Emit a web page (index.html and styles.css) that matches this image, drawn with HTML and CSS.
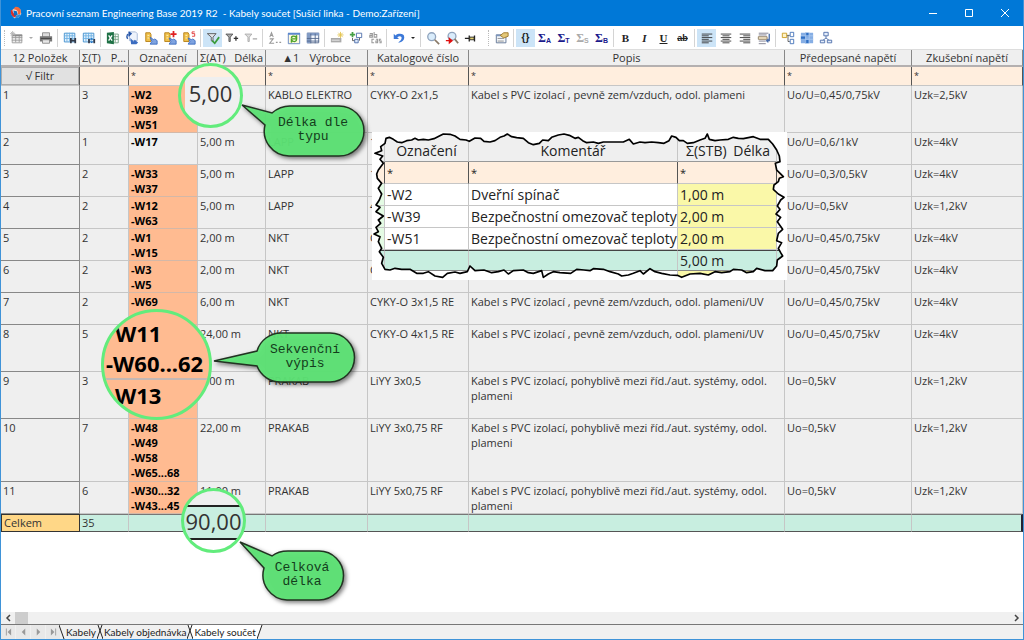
FILE: index.html
```html
<!DOCTYPE html>
<html lang="cs">
<head>
<meta charset="utf-8">
<title>Pracovní seznam Engineering Base 2019 R2</title>
<link rel="stylesheet" href="styles.css">
</head>
<body>
<div class="window">
  <header class="titlebar">
    <svg class="logo" viewBox="0 0 16 16"><path d="M3 5 8 1l5 3 1 5-3 4-5 1-3-4z" fill="#f0e4dc"/><path d="M7 1c4-1 8 3 6 8l-3 1c1-4-1-6-5-6z" fill="#f26a3c"/><path d="M2 5c0 4 1 7 5 8l2-3C5 9 4 7 4 4z" fill="#d92f2a"/><path d="M13 9c0 3-2 5-6 5l1-3z" fill="#2b8fd8"/><path d="M5 5l4 1 1 4-4 1z" fill="#0a6ec4"/></svg>
    <h1 class="title">Pracovní seznam Engineering Base 2019 R2&nbsp; - Kabely součet [Sušící linka - Demo:Zařízení]</h1>
    <button class="winbtn" aria-label="Minimalizovat"><svg viewBox="0 0 10 10"><path d="M1 5.500h8"/></svg></button>
    <button class="winbtn" aria-label="Maximalizovat"><svg viewBox="0 0 10 10"><path d="M1.500 1.500h7v7h-7z"/></svg></button>
    <button class="winbtn" aria-label="Zavřít"><svg viewBox="0 0 10 10"><path d="M1 1l8 8M9 1l-8 8"/></svg></button>
  </header>

  <div class="toolbar" role="toolbar">
    <span class="grip"></span>
    <button class="tool" aria-label="Nový"><svg viewBox="0 0 16 16"><path d="M2.500 4.500h11v9h-11zM2 7.500h12M2 10.500h12M6.500 5v8M10.500 5v8" fill="#eee" stroke="#9a9a9a"/><path d="M2 4h12v2H2z" fill="#8c8c8c"/><path d="M3 0v6M0 3h6M1 1l4 4M5 1 1 5" stroke="#b5b5b5"/></svg></button>
    <button class="caret pale" aria-label="Více"></button>
    <button class="tool" aria-label="Tisk"><svg viewBox="0 0 16 16"><path d="M4 2h8v5H4z" fill="#ddd" stroke="#888"/><path d="M1 6h14v6H1z" fill="#777"/><path d="M2 8h12v1H2z" fill="#444"/><path d="M4 10h8v4H4z" fill="#e8e8e8" stroke="#888"/></svg></button>
    <span class="sep"></span>
    <button class="tool" aria-label="Hledat"><svg viewBox="0 0 16 16"><path d="M1.500 2.500h12v10h-12z" fill="#e3f2fd" stroke="#3b8ccc"/><path d="M1 5.500h12M1 8.500h12M4.500 2v10M7.500 2v10M10.500 2v10" stroke="#6cb0e4"/><path d="M8 8h2v6H8zM13 8h2v6h-2zM10 10h3v2h-3z" fill="#333a48"/></svg></button>
    <button class="tool" aria-label="Hledat další"><svg viewBox="0 0 16 16"><path d="M1.500 2.500h12v10h-12z" fill="#e3f2fd" stroke="#3b8ccc"/><path d="M1 5.500h12M1 8.500h12M4.500 2v10M7.500 2v10M10.500 2v10" stroke="#6cb0e4"/><path d="M7 9h2v5H7zM13 9h2v5h-2z" fill="#333a48"/><path d="M9 10l2-2 2 2zM9 12l2 2 2-2z" fill="#1b6fc0"/></svg></button>
    <span class="sep"></span>
    <button class="tool" aria-label="Excel"><svg viewBox="0 0 16 16"><path d="M7 3.500h7v10H7M7 6.500h7M7 9.500h7M10.500 4v9" fill="#fff" stroke="#6f9c7f"/><path d="M1 2l8-1v14l-8-1z" fill="#1f7145"/><path d="M3 5l4 6M7 5l-4 6" stroke="#fff" stroke-width="1.500"/></svg></button>
    <button class="tool" aria-label="Synchronizovat"><svg viewBox="0 0 16 16"><path d="M5 1h7l2 2v8H5z" fill="#eef3fb" stroke="#9fb4d6"/><path d="M3 9C1 5 3 3 6 3M4 1l3 2-3 3" fill="none" stroke="#2455a8" stroke-width="1.500"/><path d="M6 8l4 4 1-2 4 3-2 2H7z" fill="#3b6cc0"/></svg></button>
    <button class="tool" aria-label="Databáze"><svg viewBox="0 0 16 16"><path d="M2 2h5l1 2v8H2z" fill="#f0c24a" stroke="#b57e14"/><path d="M4 5h2M4 8h2" stroke="#fff4cc"/><path d="M7 7l4 3 1-1 3 2v4H7l2-3z" fill="#7fa3e0" stroke="#3b6cc0"/></svg></button>
    <button class="tool" aria-label="Přidat"><svg viewBox="0 0 16 16"><path d="M2 2h5l1 2v8H2z" fill="#f0c24a" stroke="#b57e14"/><path d="M4 5h2M4 8h2" stroke="#fff4cc"/><path d="M7 8l4 2 1-1 3 2v4H7l2-3z" fill="#7fa3e0" stroke="#3b6cc0"/><path d="M12 0v7M8.500 3.500h7" stroke="#e02020" stroke-width="2"/></svg></button>
    <button class="tool" aria-label="Nahradit"><svg viewBox="0 0 16 16"><path d="M2 2h5l1 2v8H2z" fill="#f0c24a" stroke="#b57e14"/><path d="M4 5h2M4 8h2" stroke="#fff4cc"/><path d="M7 8l4 2 1-1 3 2v4H7l2-3z" fill="#7fa3e0" stroke="#3b6cc0"/><path d="M14.500 1h-3v2h3v3h-3" fill="none" stroke="#e03030"/></svg></button>
    <span class="sep"></span>
    <button class="tool on" aria-label="Filtr"><svg viewBox="0 0 16 16"><path d="M1.500 3h10L8 7v5l-2-1V7z" fill="#dfe3e8" stroke="#555"/><path d="M7 11l3 3 5-7" fill="none" stroke="#3b9c3b" stroke-width="2"/></svg></button>
    <button class="tool" aria-label="Filtr plus"><svg viewBox="0 0 16 16"><path d="M1 3.500h8L6 7v5H4.500V7z" fill="#aaa" stroke="#555"/><path d="M12.500 6v5M10 8.500h5" stroke="#333" stroke-width="1.500"/></svg></button>
    <button class="tool" aria-label="Filtr minus"><svg viewBox="0 0 16 16"><path d="M1 3.500h8L6 7v5H4.500V7z" fill="#ddd" stroke="#aaa"/><path d="M10 9h5" stroke="#aaa" stroke-width="1.500"/></svg></button>
    <span class="sep"></span>
    <button class="tool" aria-label="Řadit"><svg viewBox="0 0 16 16"><path d="M2 7l2-5 2 5M3 5h2M2 9h4l-4 5h5M9 13h2M13 13h2" fill="none" stroke="#999" stroke-width="1.200"/></svg></button>
    <button class="tool" aria-label="Obnovit"><svg viewBox="0 0 16 16"><path d="M1.500 3.500h13v11h-13z" fill="#fffbe0" stroke="#5b7fbf"/><path d="M1 2h14v2H1z" fill="#5b88cf"/><path d="M5 8c0-2 3-3 5-1l1-2v4H8M11 9c0 3-3 4-5 2l-1 2V9h3" fill="none" stroke="#4fa32a" stroke-width="1.500"/></svg></button>
    <button class="tool" aria-label="Tabulka"><svg viewBox="0 0 16 16"><path d="M1.500 2.500h13v11h-13z" fill="#f5f8fd" stroke="#52678c"/><path d="M1 2h14v3H1zM1 5h4v9H1z" fill="#829bc4"/><path d="M1 8.500h14M1 11.500h14M5.500 3v11M10.500 3v11" stroke="#52678c"/></svg></button>
    <span class="sep"></span>
    <button class="tool" aria-label="Nový řádek"><svg viewBox="0 0 16 16"><path d="M1 8h12v5H1z" fill="#aaa"/><path d="M2 10.500h9" stroke="#eee"/><path d="M12 1v7M8.500 4.500h7M9.500 2l5 5M14.500 2l-5 5" stroke="#e3c44d"/></svg></button>
    <button class="tool" aria-label="Strom"><svg viewBox="0 0 16 16"><path d="M4 1v6M1 4h6" stroke="#45a045" stroke-width="2"/><path d="M8.500 2.500h6v5h-6z" fill="#fff" stroke="#4a6ca8"/><path d="M4 8v3h3M12 8v3" fill="none" stroke="#555"/><path d="M6.500 9.500h4v4h-4z" fill="#dce8fa" stroke="#4a6ca8"/></svg></button>
    <button class="tool" aria-label="Přejmenovat"><svg viewBox="0 0 16 16"><path d="M2 3h3v4H2V5h3M7 1v6h3V4H7" fill="none" stroke="#999" stroke-width="1.200"/><path d="M7 9.500H4.500v4H7M9 9.500h2v4H9v-2h2M15 9.500h-2v2h2v2h-2" fill="none" stroke="#999" stroke-width="1.200"/></svg></button>
    <span class="sep"></span>
    <button class="tool" aria-label="Zpět"><svg viewBox="0 0 16 16"><path d="M2 3v6h6L6 7c3-2 5-1 5 1s-2 4-4 5c5 0 7-3 7-6 0-4-6-5-10-2z" fill="#3b78d8"/></svg></button>
    <button class="caret" aria-label="Historie"></button>
    <span class="sep"></span>
    <button class="tool" aria-label="Lupa"><svg viewBox="0 0 16 16"><circle cx="6.500" cy="6.500" r="4.500" fill="#d9ecfb" stroke="#8fa3bd" stroke-width="1.500"/><path d="M10 10l5 5" stroke="#8a7a68" stroke-width="2"/></svg></button>
    <button class="tool" aria-label="Lupa další"><svg viewBox="0 0 16 16"><circle cx="8" cy="6" r="4.500" fill="#d9ecfb" stroke="#8fa3bd" stroke-width="1.500"/><path d="M11 9l4 5" stroke="#8a7a68" stroke-width="2"/><path d="M1 11h5M5 8.500 8 11l-3 2.500z" fill="#e01010" stroke="#e01010" stroke-width="1.500"/></svg></button>
    <button class="tool" aria-label="Připnout"><svg viewBox="0 0 16 16"><path d="M1 8.500h5M6 5v7M12 5v7" stroke="#222" stroke-width="1.500"/><path d="M6.500 7h5v3h-5z" fill="#e0d070" stroke="#222"/></svg></button>
    <span class="grip wide"></span>
    <button class="tool" aria-label="Vlastnosti"><svg viewBox="0 0 16 16"><path d="M1.500 4.500h11v9h-11z" fill="#f4f7fb" stroke="#5a6f90"/><path d="M1 4h11v2H1z" fill="#7d95bb"/><path d="M3 8.500h7M3 11.500h7" stroke="#888"/><path d="M6 5l4-3h5v4l-5 2z" fill="#e4c878" stroke="#9a7424"/></svg></button>
    <span class="sep"></span>
    <button class="tool on glyph">{}</button>
    <button class="tool sigma">Σ<sub>A</sub></button>
    <button class="tool sigma">Σ<sub>T</sub></button>
    <button class="tool sigma off">Σ<sub>S</sub></button>
    <button class="tool sigma">Σ<sub>B</sub></button>
    <span class="sep"></span>
    <button class="tool glyph serif">B</button>
    <button class="tool glyph serif italic">I</button>
    <button class="tool glyph serif under">U</button>
    <button class="tool glyph strike">ab</button>
    <span class="sep"></span>
    <button class="tool on" aria-label="Vlevo"><svg viewBox="0 0 16 16"><path d="M2 3.500h12M2 5.500h8M2 7.500h12M2 9.500h8M2 11.500h12M2 13.500h8" stroke="#333"/></svg></button>
    <button class="tool" aria-label="Na střed"><svg viewBox="0 0 16 16"><path d="M2 3.500h12M4 5.500h8M2 7.500h12M4 9.500h8M2 11.500h12M4 13.500h8" stroke="#333"/></svg></button>
    <button class="tool" aria-label="Vpravo"><svg viewBox="0 0 16 16"><path d="M2 3.500h12M6 5.500h8M2 7.500h12M6 9.500h8M2 11.500h12M6 13.500h8" stroke="#333"/></svg></button>
    <button class="tool" aria-label="Zalomit"><svg viewBox="0 0 16 16"><path d="M2 2.500h11M2 4.500h9M2 11.500h8M2 14.500h8" stroke="#778" /><path d="M1.500 6.500h10v3h-10z" fill="#f5e6c8" stroke="#8a7a60"/><path d="M14 3v8h-3M13 9l-2 2 2 2" fill="none" stroke="#4a6ca8" stroke-width="1.500"/></svg></button>
    <span class="sep"></span>
    <button class="tool" aria-label="Schéma"><svg viewBox="0 0 16 16"><path d="M6 5h4M8 5v7h2" fill="none" stroke="#555"/><path d="M1.500 2.500h5v5h-5z" fill="#fff3c8" stroke="#c99a1e"/><path d="M10.500 1.500h4v5h-4zM10.500 9.500h4v5h-4z" fill="#fff" stroke="#3f6fb8"/></svg></button>
    <button class="tool" aria-label="Mřížka"><svg viewBox="0 0 16 16"><path d="M1 2h14v12H1z" fill="#86aee4"/><path d="M6 2h4v4H6zM1 6h5v4H1zM6 10h4v4H6z" fill="#2f6fc4"/><path d="M1 5.500h14M1 9.500h14M6.500 2v12M10.500 2v12" stroke="#a9c8f0"/></svg></button>
    <button class="tool" aria-label="Hierarchie"><svg viewBox="0 0 16 16"><path d="M8 5v3M4 11l4-3 4 3" fill="none" stroke="#4a6ca8"/><path d="M5.500 1.500h5v4h-5zM1.500 10.500h5v3h-5zM9.500 10.500h5v3h-5z" fill="#e5eefb" stroke="#4a6ca8"/></svg></button>
  </div>

  <main class="sheet">
    <table class="grid">
      <colgroup><col class="c1"><col class="c2"><col class="c3"><col class="c4"><col class="c5"><col class="c6"><col class="c7"><col class="c8"><col class="c9"></colgroup>
      <thead>
        <tr class="head"><th>12 Položek</th><th><div class="pair"><span>Σ(T)</span><span>P...</span></div></th><th>Označení</th><th><div class="pair"><span>Σ(AT)</span><span>Délka</span></div></th><th><span class="sort">▲1</span>Výrobce</th><th>Katalogové číslo</th><th>Popis</th><th>Předepsané napětí</th><th>Zkušební napětí</th></tr>
        <tr class="filter"><td><button class="filterbtn">√ Filtr</button></td><td><input aria-label="Filtr Σ(T)"></td><td><input aria-label="Filtr Označení" value="*"></td><td><input aria-label="Filtr Délka"></td><td><input aria-label="Filtr Výrobce" value="*"></td><td><input aria-label="Filtr Katalogové číslo" value="*"></td><td><input aria-label="Filtr Popis" value="*"></td><td><input aria-label="Filtr Předepsané napětí" value="*"></td><td><input aria-label="Filtr Zkušební napětí" value="*"></td></tr>
      </thead>
      <tbody>
        <tr class="l3"><th>1</th><td>3</td><td class="mark">-W2<br>-W39<br>-W51</td><td></td><td>KABLO ELEKTRO</td><td>CYKY-O 2x1,5</td><td>Kabel s PVC izolací , pevně zem/vzduch, odol. plameni</td><td>Uo/U=0,45/0,75kV</td><td>Uzk=2,5kV</td></tr>
        <tr class="l2"><th>2</th><td>1</td><td class="name">-W17</td><td>5,00 m</td><td>LAPP</td><td>1</td><td></td><td>Uo/U=0,6/1kV</td><td>Uzk=4kV</td></tr>
        <tr class="l2"><th>3</th><td>2</td><td class="mark">-W33<br>-W37</td><td>5,00 m</td><td>LAPP</td><td>1</td><td></td><td>Uo/U=0,3/0,5kV</td><td>Uzk=4kV</td></tr>
        <tr class="l2"><th>4</th><td>2</td><td class="mark">-W12<br>-W63</td><td>5,00 m</td><td>LAPP</td><td>4</td><td></td><td>Uo/U=0,5kV</td><td>Uzk=1,2kV</td></tr>
        <tr class="l2"><th>5</th><td>2</td><td class="mark">-W1<br>-W15</td><td>2,00 m</td><td>NKT</td><td>C</td><td></td><td>Uo/U=0,45/0,75kV</td><td>Uzk=4kV</td></tr>
        <tr class="l2"><th>6</th><td>2</td><td class="mark">-W3<br>-W5</td><td>2,00 m</td><td>NKT</td><td>C</td><td></td><td>Uo/U=0,45/0,75kV</td><td>Uzk=4kV</td></tr>
        <tr class="l2"><th>7</th><td>2</td><td class="mark">-W69</td><td>6,00 m</td><td>NKT</td><td>CYKY-O 3x1,5 RE</td><td>Kabel s PVC izolací , pevně zem/vzduch, odol. plameni/UV</td><td>Uo/U=0,45/0,75kV</td><td>Uzk=4kV</td></tr>
        <tr class="l3"><th>8</th><td>5</td><td class="mark"></td><td>24,00 m</td><td>NKT</td><td>CYKY-O 4x1,5 RE</td><td>Kabel s PVC izolací , pevně zem/vzduch, odol. plameni/UV</td><td>Uo/U=0,45/0,75kV</td><td>Uzk=4kV</td></tr>
        <tr class="l3"><th>9</th><td>3</td><td class="mark"></td><td>5,00 m</td><td>PRAKAB</td><td>LiYY 3x0,5</td><td>Kabel s PVC izolací, pohyblivě mezi říd./aut. systémy, odol. plameni</td><td>Uo=0,5kV</td><td>Uzk=1,2kV</td></tr>
        <tr class="l4"><th>10</th><td>7</td><td class="mark">-W48<br>-W49<br>-W58<br>-W65...68</td><td>22,00 m</td><td>PRAKAB</td><td>LiYY 3x0,75 RF</td><td>Kabel s PVC izolací, pohyblivě mezi říd./aut. systémy, odol. plameni</td><td>Uo=0,5kV</td><td>Uzk=1,2kV</td></tr>
        <tr class="l2"><th>11</th><td>6</td><td class="mark">-W30...32<br>-W43...45</td><td>11,00 m</td><td>PRAKAB</td><td>LiYY 5x0,75 RF</td><td>Kabel s PVC izolací, pohyblivě mezi říd./aut. systémy, odol. plameni</td><td>Uo=0,5kV</td><td>Uzk=1,2kV</td></tr>
      </tbody>
      <tfoot>
        <tr class="total"><th>Celkem</th><td>35</td><td></td><td></td><td></td><td></td><td></td><td></td><td></td></tr>
      </tfoot>
    </table>

    <section class="snippet">
      <table class="detail">
        <colgroup><col class="d0"><col class="d1"><col class="d2"><col class="d3"><col class="d4"></colgroup>
        <tr class="dhead"><th></th><th>Označení</th><th>Komentář</th><th><div class="pair"><span>Σ(STB)</span><span>Délka</span></div></th><th></th></tr>
        <tr class="dfilter"><td></td><td>*</td><td>*</td><td>*</td><td></td></tr>
        <tr><td></td><td>-W2</td><td>Dveřní spínač</td><td class="sum">1,00 m</td><td></td></tr>
        <tr><td></td><td>-W39</td><td>Bezpečnostní omezovač teploty</td><td class="sum">2,00 m</td><td></td></tr>
        <tr><td></td><td>-W51</td><td>Bezpečnostní omezovač teploty</td><td class="sum">2,00 m</td><td></td></tr>
        <tr class="dtotal"><td></td><td></td><td></td><td>5,00 m</td><td></td></tr>
        <tr class="dnext"><td></td><td></td><td></td><td class="sum"></td><td></td></tr>
      </table>
      <svg class="tear" viewBox="36 36 1245 444" preserveAspectRatio="none">
        <path fill="#fff" stroke="#000" stroke-width="5" stroke-linejoin="round" fill-rule="evenodd" d="M0 0H1320V520H0ZM78 55 88 52 100 58 112 66 125 68 140 62 155 60 165 55 175 60 190 58 205 60 222 56 238 48 250 42 270 43 285 48 300 58 318 60 328 64 345 54 362 55 372 64 390 66 405 62 420 52 432 48 442 42 455 50 470 53 490 55 505 68 520 74 538 70 548 60 565 62 575 52 595 45 612 42 628 46 645 55 655 52 668 62 680 68 700 66 715 70 730 66 765 66 790 66 808 58 820 72 840 66 855 68 875 66 895 68 912 70 927 62 935 48 948 52 958 62 970 62 982 70 1000 68 1020 60 1035 55 1042 42 1048 58 1065 62 1080 60 1105 58 1120 52 1135 55 1150 56 1180 50 1200 58 1225 58 1238 72 1250 90 1258 108 1260 125 1246 130 1250 150 1258 158 1270 170 1258 175 1255 185 1242 195 1240 208 1255 222 1272 232 1262 240 1252 258 1260 268 1248 282 1262 292 1252 305 1268 328 1255 340 1250 362 1265 368 1255 385 1262 398 1268 408 1252 420 1250 438 1238 452 1215 452 1190 445 1180 455 1160 458 1145 450 1120 448 1110 455 1085 458 1065 455 1045 465 1020 460 990 462 965 472 952 466 930 465 905 460 885 455 870 446 850 462 840 452 820 460 805 465 785 468 775 462 750 455 730 448 700 446 690 452 672 450 650 448 632 460 600 458 580 455 565 462 550 472 545 452 520 460 505 458 490 450 460 452 445 462 432 450 415 455 395 458 372 450 345 452 330 438 322 455 300 460 285 456 262 460 248 472 225 468 205 455 190 460 170 460 150 448 125 448 105 445 90 450 75 448 65 430 70 412 58 395 65 385 55 365 60 350 42 342 55 335 48 322 62 310 55 300 70 288 48 275 60 262 48 255 58 240 65 222 55 205 65 190 52 175 50 162 55 150 70 130 60 118 68 108 45 100 65 92 62 80 75 70Z"/>
      </svg>
    </section>

    <svg class="tails" viewBox="0 0 400 590">
      <g class="balloon">
        <path d="M242 55 272 63Q280 56 290 56H339A25 25 0 0 1 339 106H289A25 25 0 0 1 265 75Z"/>
        <path d="M214 311 257 301A25 25 0 0 1 281 283H330A24 24 0 0 1 330 332H281A25 25 0 0 1 257 316Z"/>
        <path d="M240 492 272 506Q278 501 288 501H319A24 24 0 0 1 319 550H287A25 25 0 0 1 264 518Z"/>
      </g>
    </svg>
    <p class="note note-type">Délka dle<br>typu</p>
    <p class="note note-seq">Sekvenční<br>výpis</p>
    <p class="note note-sum">Celková<br>délka</p>

    <div class="lens lens-type"><span>5,00</span></div>
    <div class="lens lens-seq"><div class="upper"><span>W11</span><span>-W60...62</span></div><div class="lower"><span>W13</span></div></div>
    <div class="lens lens-sum"><span>90,00</span></div>
  </main>

  <div class="scroll"><button class="arrow" aria-label="Doleva"><svg viewBox="0 0 8 8"><path d="M6 1 3 4l3 3"/></svg></button><span class="thumb"></span><button class="arrow end" aria-label="Doprava"><svg viewBox="0 0 8 8"><path d="M3 1l3 3-3 3"/></svg></button></div>
  <nav class="tabs">
    <button class="step" aria-label="První"><svg viewBox="0 0 8 8"><path d="M1 0h1v8H1zM7 0v8L3 4z"/></svg></button>
    <button class="step" aria-label="Předchozí"><svg viewBox="0 0 8 8"><path d="M6 0v8L2 4z"/></svg></button>
    <button class="step" aria-label="Další"><svg viewBox="0 0 8 8"><path d="M2 0v8l4-4z"/></svg></button>
    <button class="step" aria-label="Poslední"><svg viewBox="0 0 8 8"><path d="M1 0v8l4-4zM6 0h1v8H6z"/></svg></button>
    <svg class="slant first" viewBox="0 0 6 14"><path d="M0 0l5 14"/></svg>
    <button class="tab">Kabely</button>
    <svg class="slant" viewBox="0 0 6 14"><path d="M5 0 0 14M1 0l5 14"/></svg>
    <button class="tab">Kabely objednávka</button>
    <svg class="slant" viewBox="0 0 6 14"><path class="white" d="M1 0h5v14z"/><path d="M5 0 0 14M1 0l5 14"/></svg>
    <button class="tab current">Kabely součet</button>
    <svg class="slant" viewBox="0 0 6 14"><path class="white" d="M0 0h5L0 14z"/><path d="M5 0 0 14"/></svg>
  </nav>
</div>
</body>
</html>
```
FILE: styles.css
```css
* { box-sizing: border-box; }
body { margin: 0; font: 11px/15px "Open Sans", "Noto Sans", sans-serif; color: #333; background: #fff; }
button { margin: 0; padding: 0; border: 0; background: none; font: inherit; color: inherit; }
.window { height: 100vh; display: flex; flex-direction: column; border: 1px solid #3f93d8; border-top: 0; overflow: hidden; }

.titlebar { flex: none; height: 26px; display: flex; align-items: center; background: #0078d7; color: #fff; padding-left: 8px; }
.logo { width: 14px; height: 14px; margin-right: 3px; }
.title { flex: 1; margin: 0; font: 10px/14px Lato, sans-serif; white-space: pre; }
.winbtn { width: 36px; height: 26px; display: flex; align-items: center; justify-content: center; }
.winbtn svg { width: 10px; height: 10px; fill: none; stroke: #fff; }

.toolbar { flex: none; height: 24px; display: flex; align-items: center; background: #fff; padding-left: 3px; border-bottom: 1px solid #ddd; }
.grip { width: 1px; height: 16px; margin-right: 2px; border-left: 1px dotted #bbb; }
.grip.wide { margin: 0 3px 0 8px; }
.sep { width: 1px; height: 18px; margin: 0 2px; background: #d4d4d4; }
.tool { width: 19px; height: 18px; display: flex; align-items: center; justify-content: center; white-space: nowrap; }
.tool svg { width: 14px; height: 14px; }
.tool.on { background: #cce4f7; }
.caret { width: 10px; height: 18px; display: flex; align-items: center; justify-content: center; }
.caret::after { content: ""; border: 2px solid transparent; border-top-color: #222; border-bottom: 0; }
.caret.pale::after { border-top-color: #aaa; }
.glyph { font: bold 10px/16px "Liberation Sans", sans-serif; color: #222; }
.serif { font-family: "Liberation Serif", serif; font-size: 11px; }
.italic { font-style: italic; }
.under { text-decoration: underline; }
.strike { text-decoration: line-through; font-size: 9px; }
.sigma { font: bold 12px/16px "Liberation Serif", serif; color: #1a1a8c; }
.sigma sub { font: bold 7px/8px "Liberation Sans", sans-serif; align-self: flex-end; padding-bottom: 2px; }
.sigma.off { color: #aaa; }

.sheet { flex: 1; min-height: 0; position: relative; background: #fff; overflow: hidden; }
.grid { width: 100%; table-layout: fixed; border-collapse: separate; border-spacing: 0; background: #efefef; }
.c1 { width: 79px; } .c2 { width: 49px; } .c3 { width: 69px; } .c4 { width: 68px; } .c5 { width: 102px; }
.c6 { width: 101px; } .c8 { width: 127px; } .c9 { width: 111px; }
.grid th, .grid td { padding: 1px 1px 0 2px; border-right: 1px solid #c6c6c6; border-bottom: 1px solid #c6c6c6; text-align: left; vertical-align: top; font-weight: normal; }
.grid tbody th { border-color: #888; }
.grid .head th { height: 17px; padding: 0 2px; border-right-color: #888; border-bottom: 2px solid #b4b0b0; text-align: center; white-space: nowrap; }
.pair { display: flex; justify-content: space-between; }
.sort { margin-right: 10px; }
.grid .filter td { height: 19px; padding: 0; background: #ffeede; border-right-color: #555; }
.filter input { display: block; width: 100%; height: 17px; border: 0; padding: 0 2px; background: transparent; font: inherit; font-size: 9px; color: #333; }
.filterbtn { display: block; width: 100%; height: 18px; background: #e1e1e1; border: 1px solid #adadad; line-height: 14px; }
.l2 td { height: 32px; } .l3 td { height: 47px; } .l4 td { height: 63px; }
.grid .mark, .grid .name { font-weight: bold; font-family: "Noto Sans", sans-serif; color: #000; }
.grid .mark { background: #ffbb91; border-bottom-color: #d3b8a8; }
.grid .total td, .grid .total th { height: 18px; padding-top: 0; background: #c8eee0; border-top: 1px solid #777; border-bottom: 1px solid #555; }
.grid .total th { background: #ffd787; border: 1px solid #333; }
.grid .total td:last-child { border-right: 2px solid #223; }

.snippet { position: absolute; left: 371px; top: 82px; width: 415px; height: 148px; overflow: hidden; background: #fff; }
.tear { position: absolute; inset: 0; width: 100%; height: 100%; }
.detail { width: 100%; table-layout: fixed; border-collapse: separate; border-spacing: 0; font-size: 14px; line-height: 20px; color: #222; }
.d0 { width: 13px; } .d1 { width: 84px; } .d3 { width: 99px; } .d4 { width: 10px; }
.detail th, .detail td { height: 22px; padding: 0 2px; border-right: 1px solid #c6c6c6; border-bottom: 1px solid #c6c6c6; font-weight: normal; white-space: nowrap; background: #fff; }
.detail td:first-child { background: #e4fbe4; }
.detail .dhead th { height: 30px; padding-top: 9px; background: #efefef; border-bottom-color: #999; }
.detail .dhead .pair { padding: 0 4px 0 6px; }
.detail .dfilter td { background: #ffeede; border-right-color: #555; font-size: 11px; }
.detail .sum { background: #faf8a8; }
.detail .dtotal td { height: 21px; background: #c8eee0; border-top: 1px solid #444; border-bottom-color: #888; line-height: 18px; }

.tails { position: absolute; left: -1px; top: 0; width: 400px; height: 590px; }
.balloon path { fill: #5ee576; fill-opacity: .94; stroke: #223322; stroke-width: 1.5; filter: drop-shadow(2px 2px 2px #0008); }
.note { position: absolute; width: 100px; margin: 0; text-align: center; font: 13px/14px "Liberation Mono", monospace; color: #143d1c; }
.note-type { left: 262px; top: 66px; }
.note-seq { left: 254px; top: 293px; }
.note-sum { left: 251px; top: 511px; }

.lens { position: absolute; border: 3px solid #62ec7c; border-radius: 50%; overflow: hidden; white-space: nowrap; font-size: 22px; line-height: 30px; text-align: center; }
.lens-type { left: 177px; top: 13px; width: 65px; height: 65px; padding-top: 12px; background: linear-gradient(#ffeede 11px, #efefef00 11px), linear-gradient(90deg, #ffbb91 4px, #efefef 4px); }
.lens-seq { left: 100px; top: 259px; width: 111px; height: 111px; background: #ffbb91; color: #000; font-family: "Noto Sans", sans-serif; font-weight: bold; text-align: left; }
.lens-seq span { display: block; padding-left: 11px; }
.upper { padding-top: 6px; height: 68px; border-bottom: 2px solid #c4b8b4; }
.upper span + span { padding-left: 2px; }
.lens-sum { left: 180px; top: 438px; width: 65px; height: 65px; padding-top: 15px; background: linear-gradient(#efefef 14px, #222 14px, #222 16px, #c8eee0 16px, #c8eee0 47px, #222 47px, #222 49px, #fff 49px); }

.scroll { flex: none; height: 12px; display: flex; background: #f0f0f0; }
.arrow { width: 14px; display: flex; align-items: center; justify-content: center; }
.arrow svg { width: 8px; height: 8px; fill: none; stroke: #444; stroke-width: 1.5; }
.arrow.end { margin-left: auto; }
.thumb { width: 13px; background: #cdcdcd; }
.tabs { flex: none; height: 15px; display: flex; background: #f0f0f0; border-top: 1px solid #777; font: 10px/13px Lato, sans-serif; color: #222; }
.step { width: 14px; margin-right: 1px; display: flex; align-items: center; justify-content: center; background: #e8e8e8; }
.step svg { width: 7px; height: 8px; fill: #999; }
.slant { width: 6px; height: 14px; fill: none; stroke: #222; }
.slant .white { fill: #fff; stroke: none; }
.slant.first { margin-left: -2px; }
.tab { white-space: nowrap; padding: 0 1px; }
.current { background: #fff; }
```
